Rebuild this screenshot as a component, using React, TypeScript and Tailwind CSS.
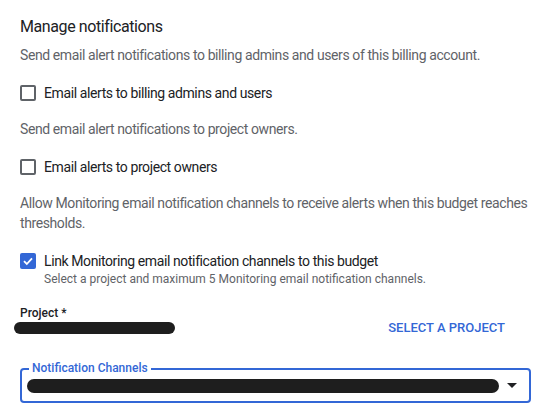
import { useState } from "react";

function Box({ checked, onClick }: { checked: boolean; onClick: () => void }) {
  if (checked) {
    return (
      <button
        onClick={onClick}
        className="w-4 h-4 shrink-0 rounded-[2px] bg-[#3367d6] flex items-center justify-center"
      >
        <svg width="12" height="12" viewBox="0 0 12 12" fill="none">
          <path d="M2 6.2L4.8 9L10 3.4" stroke="#fff" strokeWidth="1.8" />
        </svg>
      </button>
    );
  }
  return (
    <button
      onClick={onClick}
      className="w-4 h-4 shrink-0 rounded-[2px] border-2 border-[#5f6368] bg-white"
    />
  );
}

function Redacted({ className }: { className: string }) {
  return <div className={"rounded-full bg-[#1e1e1e] blur-[0.6px] " + className} />;
}

export default function App() {
  const [checks, setChecks] = useState([false, false, true]);
  const flip = (i: number) =>
    setChecks((prev) => prev.map((v, j) => (j === i ? !v : v)));

  return (
    <div className="w-[543px] h-[415px] overflow-hidden bg-white pl-5 pr-3 pt-[17px] font-['Roboto',sans-serif] text-[#202124]">
      <h2 className="text-[16px] leading-5 tracking-[-0.4px]">Manage notifications</h2>
      <p className="mt-[8px] text-[14px] leading-5 tracking-[-0.4px] text-[#5f6368]">
        Send email alert notifications to billing admins and users of this billing account.
      </p>

      <label className="mt-[18px] flex items-center gap-2 h-5">
        <Box checked={checks[0]} onClick={() => flip(0)} />
        <span className="text-[14px] leading-5 tracking-[-0.4px]">
          Email alerts to billing admins and users
        </span>
      </label>

      <p className="mt-4 text-[14px] leading-5 tracking-[-0.4px] text-[#5f6368]">
        Send email alert notifications to project owners.
      </p>

      <label className="mt-[18px] flex items-center gap-2 h-5">
        <Box checked={checks[1]} onClick={() => flip(1)} />
        <span className="text-[14px] leading-5 tracking-[-0.4px]">Email alerts to project owners</span>
      </label>

      <p className="mt-4 text-[14px] leading-5 tracking-[-0.4px] text-[#5f6368]">
        Allow Monitoring email notification channels to receive alerts when this budget reaches
        thresholds.
      </p>

      <div className="mt-[18px] flex gap-2">
        <div className="pt-[2px]">
          <Box checked={checks[2]} onClick={() => flip(2)} />
        </div>
        <div>
          <div className="text-[14px] leading-5 tracking-[-0.4px]">
            Link Monitoring email notification channels to this budget
          </div>
          <div className="text-[12px] leading-4 text-[#5f6368]">
            Select a project and maximum 5 Monitoring email notification channels.
          </div>
        </div>
      </div>

      <div className="mt-[18px] text-[12px] leading-4 font-medium">Project *</div>
      <div className="flex items-center justify-between h-[14px]">
        <Redacted className="-ml-[6px] w-[161px] h-3" />
        <button className="mr-[26px] text-[13px] font-medium text-[#3367d6]">
          SELECT A PROJECT
        </button>
      </div>

      <div className="relative mt-[33px] h-[35px] rounded-[4px] border-2 border-[#3367d6] flex items-center pl-[5px] pr-3">
        <span className="absolute -top-[10px] left-[7px] bg-white px-[3px] text-[12px] leading-4 font-medium text-[#3367d6]">
          Notification Channels
        </span>
        <Redacted className="flex-1 h-[14px]" />
        <svg className="ml-2 shrink-0" width="10" height="5" viewBox="0 0 10 5">
          <path d="M0 0h10L5 5z" fill="#202124" />
        </svg>
      </div>
    </div>
  );
}
